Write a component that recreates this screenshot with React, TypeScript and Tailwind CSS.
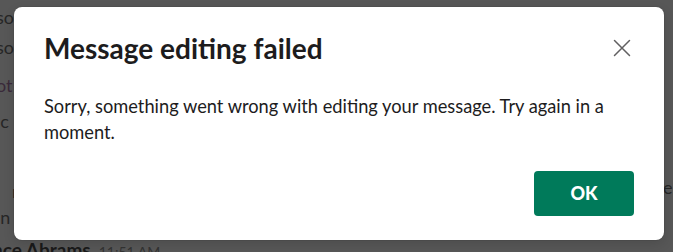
export default function App() {
  return (
    <div className="relative h-[252px] w-[673px] overflow-hidden bg-[#575757] font-['Lato','Noto_Sans',sans-serif] text-[#1d1d1d]">
      {/* dimmed channel content behind the overlay */}
      <div className="absolute left-[-4px] top-0 flex flex-col text-[18px] leading-[30px] text-[#262626]">
        <span className="mt-[2px]">so</span>
        <span>so</span>
        <span className="mt-[8px] text-[#3a2a3a]">ot</span>
        <span className="mt-[6px]">ic</span>
        <span className="mt-[8px] pl-[34px] text-[14px] text-[#333]">1</span>
        <span className="mt-[2px] pl-[16px]">n</span>
        <span className="mt-[-4px]">in</span>
      </div>
      <div className="absolute right-[-6px] top-[174px] text-[18px] text-[#262626]">er</div>
      <div className="absolute left-[-8px] top-[236px] flex items-baseline gap-[8px]">
        <span className="text-[19px] font-bold text-[#1a1a1a]">nce Abrams</span>
        <span className="text-[14px] text-[#333]">11:51 AM</span>
      </div>

      {/* modal */}
      <div className="absolute left-[14px] top-[7px] flex h-[233px] w-[650px] flex-col rounded-[8px] bg-white pl-[30px] pr-[30px] shadow-[0_0_0_1px_rgba(0,0,0,0.06),0_4px_12px_rgba(0,0,0,0.12)]">
        <div className="flex items-center justify-between pt-[23px]">
          <h1 className="text-[28px] font-bold leading-[36px] text-[#1d1c1d]">Message editing failed</h1>
          <button className="mr-[-6px] flex h-[36px] w-[36px] items-center justify-center">
            <svg width="18" height="18" viewBox="0 0 18 18" fill="none" stroke="#616061" strokeWidth="1.5" strokeLinecap="round">
              <path d="M1.5 1.5L16.5 16.5M16.5 1.5L1.5 16.5" />
            </svg>
          </button>
        </div>
        <p className="mt-[27px] text-[18.25px] leading-[26px] text-[#1d1c1d]">
          Sorry, something went wrong with editing your message. Try again in a moment.
        </p>
        <div className="mt-auto flex justify-end pb-[24px]">
          <button className="h-[45px] w-[100px] rounded-[4px] bg-[#007a5a] text-[18px] font-black text-white">OK</button>
        </div>
      </div>
    </div>
  );
}
